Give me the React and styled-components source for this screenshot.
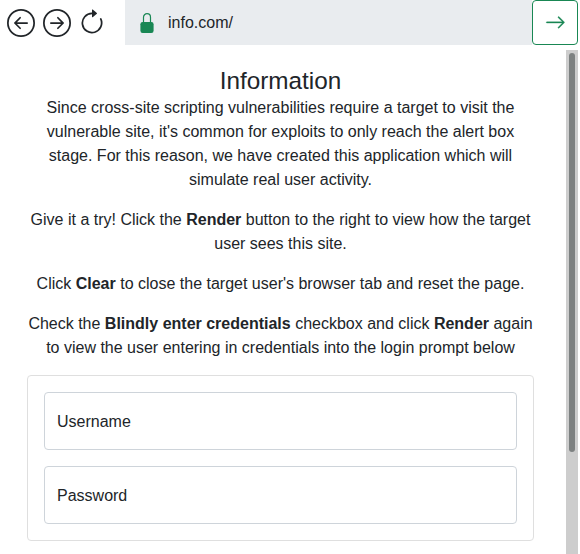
import React from "react";
import styled, { createGlobalStyle } from "styled-components";
import {
  BsArrowLeftCircle,
  BsArrowRightCircle,
  BsArrowClockwise,
  BsArrowRight,
} from "react-icons/bs";

const GlobalStyle = createGlobalStyle`
  *, *::before, *::after { box-sizing: border-box; }
  body {
    margin: 0;
    overflow: hidden;
    background: #fff;
    color: #212529;
    font-family: "Liberation Sans", Arial, sans-serif;
    font-size: 16px;
    line-height: 24px;
  }
`;

const Browser = styled.div`
  display: flex;
  flex-direction: column;
  width: 578px;
  height: 554px;
  overflow: hidden;
`;

const Toolbar = styled.header`
  display: flex;
  flex: none;
  height: 45px;
`;

const NavButtons = styled.nav`
  display: flex;
  align-items: center;
  gap: 8px;
  width: 125px;
  padding-left: 7px;
`;

const NavButton = styled.button`
  display: flex;
  padding: 0;
  border: 0;
  background: none;
  color: #212529;
  font-size: 28px;

  &:last-child {
    margin-left: -1px;
  }
`;

const AddressBar = styled.div`
  display: flex;
  flex: 1;
  align-items: center;
  gap: 14px;
  padding-left: 15px;
  background: #e9ecef;
`;

const LockIcon = styled.svg`
  flex: none;
  width: 14px;
  height: 20px;
  margin-top: 1px;
  color: #198754;
`;

const GoButton = styled.button`
  display: flex;
  align-items: center;
  justify-content: center;
  width: 46px;
  padding: 0 0 1px;
  border: 1px solid #198754;
  border-radius: 4px;
  background: #fff;
  color: #198754;
  font-size: 20.8px;

  svg {
    stroke-width: 0.25;
  }
`;

const Viewport = styled.div`
  display: flex;
  flex: 1;
  min-height: 0;
  padding-top: 5px;
`;

const Page = styled.main`
  flex: 1;
  min-width: 0;
  padding: 16px 32px 0 27px;
  text-align: center;
`;

const Title = styled.h3`
  margin: 0 0 1px;
  font-size: 24.3px;
  font-weight: 400;
  line-height: 29px;
`;

const Paragraph = styled.p`
  margin: 0 0 16px;
  white-space: nowrap;
`;

const LoginCard = styled.form`
  display: flex;
  flex-direction: column;
  gap: 16px;
  margin-top: -1px;
  padding: 16px;
  border: 1px solid #dfdfdf;
  border-radius: 4px;
`;

const Field = styled.label`
  display: flex;
  align-items: center;
  height: 58px;
  padding: 2px 12px 0;
  border: 1px solid #ced4da;
  border-radius: 4px;
`;

const ScrollTrack = styled.div`
  flex: none;
  width: 12px;
  padding: 3px 3px 0;
  background: #cdcdcd;
`;

const ScrollThumb = styled.div`
  height: 399px;
  border-radius: 3px;
  background: #7d8181;
`;

function Lock() {
  return (
    <LockIcon viewBox="0 0 14 20" fill="none">
      <rect x="0.4" y="9" width="13.2" height="11" rx="2.2" fill="currentColor" />
      <path d="M3.5 9.5V4.2a3.5 3.5 0 0 1 7 0v5.3" stroke="currentColor" strokeWidth="1.2" />
    </LockIcon>
  );
}

export default function App() {
  return (
    <>
      <GlobalStyle />
      <Browser>
        <Toolbar>
          <NavButtons>
            <NavButton aria-label="Back"><BsArrowLeftCircle /></NavButton>
            <NavButton aria-label="Forward"><BsArrowRightCircle /></NavButton>
            <NavButton aria-label="Reload"><BsArrowClockwise /></NavButton>
          </NavButtons>
          <AddressBar>
            <Lock />
            <span>info.com/</span>
          </AddressBar>
          <GoButton aria-label="Go"><BsArrowRight /></GoButton>
        </Toolbar>
        <Viewport>
          <Page>
            <Title>Information</Title>
            <Paragraph>
              Since cross-site scripting vulnerabilities require a target to visit the<br />
              vulnerable site, it's common for exploits to only reach the alert box<br />
              stage. For this reason, we have created this application which will<br />
              simulate real user activity.
            </Paragraph>
            <Paragraph>
              Give it a try! Click the <b>Render</b> button to the right to view how the target<br />
              user sees this site.
            </Paragraph>
            <Paragraph>
              Click <b>Clear</b> to close the target user's browser tab and reset the page.
            </Paragraph>
            <Paragraph>
              Check the <b>Blindly enter credentials</b> checkbox and click <b>Render</b> again<br />
              to view the user entering in credentials into the login prompt below
            </Paragraph>
            <LoginCard>
              <Field>Username</Field>
              <Field>Password</Field>
            </LoginCard>
          </Page>
          <ScrollTrack>
            <ScrollThumb />
          </ScrollTrack>
        </Viewport>
      </Browser>
    </>
  );
}
